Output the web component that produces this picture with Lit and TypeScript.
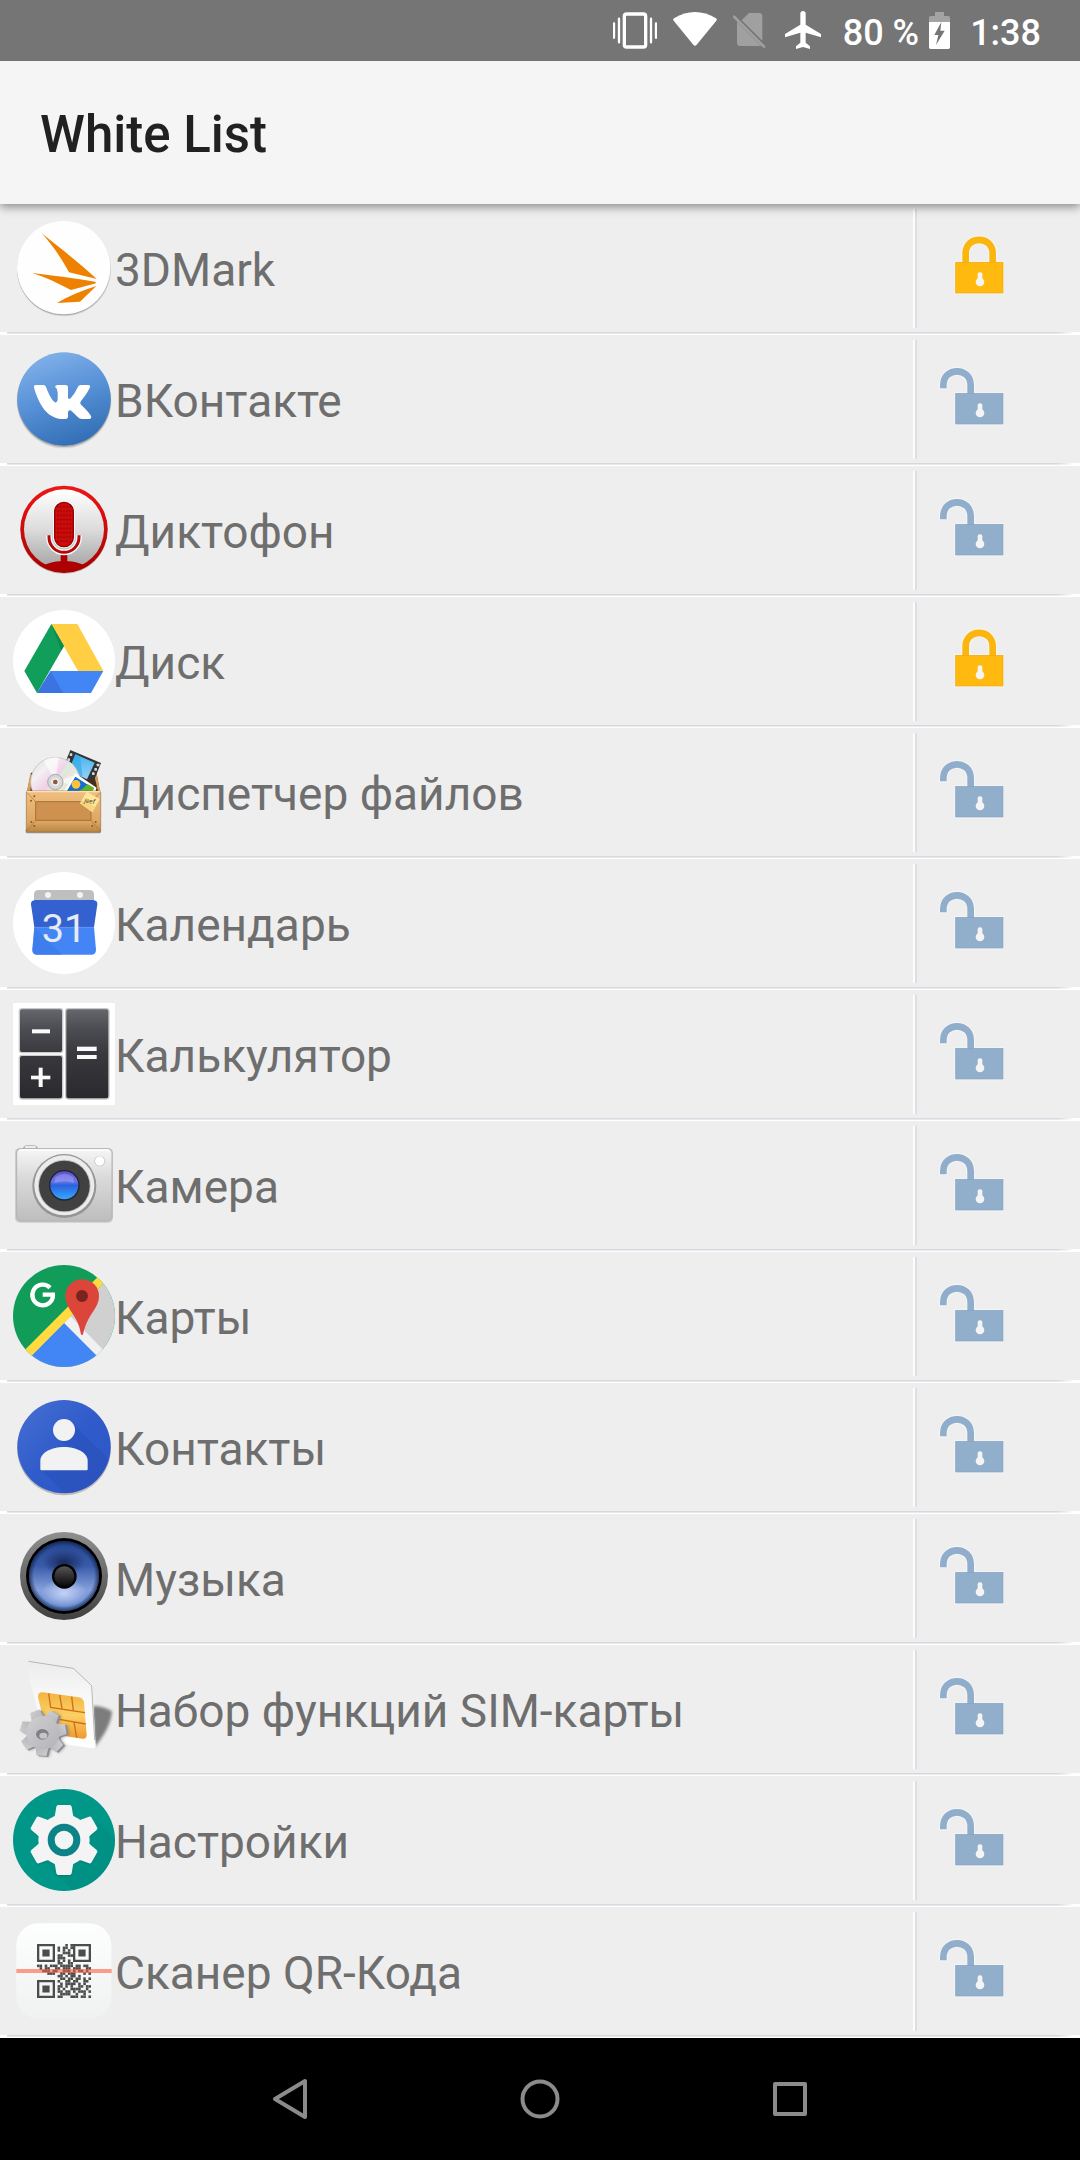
import { LitElement, html, css, svg } from "lit";
import { customElement, property, state } from "lit/decorators.js";

/* ---------- App icons: each one is drawn on a 306-unit square ---------- */

const mark3d = svg`
  <svg viewBox="39 531 306 306" aria-hidden="true">
    <circle cx="192" cy="688" r="141" fill="#000" opacity=".1"/>
    <circle cx="191" cy="686" r="140" fill="#000" opacity=".22"/>
    <circle cx="191" cy="683" r="140" fill="#fefefe"/>
    <g fill="#ee8200">
      <path d="M125 580C185 628 245 674 290 717L207 697C188 660 155 612 125 580z"/>
      <path d="M97 699C160 708 225 714 286 725L288 730L213 750C175 730 137 712 97 699z"/>
      <path d="M289 738L240 785L171 789C205 768 248 751 289 738z"/>
    </g>
  </svg>`;

const vk = svg`
  <svg viewBox="39 54 306 306" aria-hidden="true">
    <defs>
      <linearGradient id="vk-bg" x1=".25" y1="0" x2=".6" y2="1">
        <stop offset="0" stop-color="#82b2ea"/><stop offset=".5" stop-color="#5690d6"/><stop offset="1" stop-color="#326fb4"/>
      </linearGradient>
    </defs>
    <circle cx="192" cy="213" r="142" fill="#000" opacity=".1"/>
    <circle cx="192" cy="210" r="141" fill="#000" opacity=".2"/>
    <circle cx="192" cy="207" r="140" fill="url(#vk-bg)"/>
    <path fill="#fff" d="M107 165H130Q136 165 138 171C146 193 157 212 165 217Q173 219 173 205V187Q172 175 165 170Q167 165 173 165H197Q204 165 204 172V203Q206 210 213 203Q226 188 234 170Q236 165 242 165H265Q272 166 270 172Q262 190 243 213Q238 219 243 224Q265 244 273 258Q276 266 267 267H245Q239 267 234 262L217 245Q206 236 204 247V259Q204 267 196 267C140 270 116 220 102 173Q101 165 107 165z"/>
  </svg>`;

const micDots = [530, 543, 556, 569, 582, 595, 608, 621, 634].flatMap((y) =>
  [174, 183, 192, 201, 210].map((x) => svg`<circle cx=${x} cy=${y} r="2.4" fill="#8d0404"/>`)
);
const recorder = svg`
  <svg viewBox="39 447 306 306" aria-hidden="true">
    <defs>
      <linearGradient id="rec-bg" x1="0" y1="0" x2="0" y2="1">
        <stop offset="0" stop-color="#fff"/><stop offset=".5" stop-color="#dcdcdc"/><stop offset=".85" stop-color="#b3b3b3"/><stop offset="1" stop-color="#a5a5a5"/>
      </linearGradient>
      <linearGradient id="rec-red" x1="0" y1="0" x2="0" y2="1">
        <stop offset="0" stop-color="#ee1616"/><stop offset="1" stop-color="#a80000"/>
      </linearGradient>
      <clipPath id="rec-c"><circle cx="192" cy="598" r="125"/></clipPath>
    </defs>
    <circle cx="192" cy="601" r="131" fill="#000" opacity=".18"/>
    <circle cx="192" cy="598" r="131" fill="url(#rec-red)"/>
    <circle cx="192" cy="598" r="120" fill="url(#rec-bg)"/>
    <path clip-path="url(#rec-c)" d="M130 706Q165 692 182 694V664H202V694Q220 692 254 706L240 740H144z" fill="#ad0000"/>
    <path d="M147 616V622A45 45 0 0 0 237 622V616" fill="none" stroke="#fafafa" stroke-width="17"/>
    <path d="M147 616V622A45 45 0 0 0 237 622V616" fill="none" stroke="#b30909" stroke-width="9"/>
    <rect x="159" y="513" width="66" height="142" rx="33" fill="#f7f7f7"/>
    <rect x="164" y="517" width="56" height="133" rx="28" fill="#cc0b0b" stroke="#900" stroke-width="4"/>
    ${micDots}
  </svg>`;

const drive = svg`
  <svg viewBox="39 60 306 306" aria-hidden="true">
    <circle cx="192" cy="213" r="153" fill="#fff"/>
    <path d="M154 102H232L310 243H234z" fill="#ffce43"/>
    <path d="M152 243H310L273 309H111z" fill="#4285f4"/>
    <path d="M152 243L189 309H111z" fill="#3b74e0"/>
    <path d="M154 102L192 168L111 309L73 243z" fill="#119e5a"/>
    <path d="M154 102L192 168L184 182z" fill="#0b8248" opacity=".7"/>
  </svg>`;

const files = svg`
  <svg viewBox="39 453 306 306" aria-hidden="true">
    <defs>
      <linearGradient id="f-wood" x1="0" y1="0" x2="0" y2="1">
        <stop offset="0" stop-color="#f0bf80"/><stop offset=".75" stop-color="#dca663"/><stop offset="1" stop-color="#b98645"/>
      </linearGradient>
      <linearGradient id="f-disc" x1="0" y1="0" x2="1" y2="1">
        <stop offset="0" stop-color="#d8d8da"/><stop offset=".25" stop-color="#f3f1f3"/><stop offset=".45" stop-color="#f2cfe8"/><stop offset=".6" stop-color="#e8ecd9"/><stop offset="1" stop-color="#c8c9d0"/>
      </linearGradient>
      <linearGradient id="f-film" x1="0" y1="0" x2="0" y2="1">
        <stop offset="0" stop-color="#45b4f0"/><stop offset="1" stop-color="#98d0f8"/>
      </linearGradient>
    </defs>
    <rect x="77" y="716" width="226" height="14" rx="4" fill="#000" opacity=".35"/>
    <path d="M93 548L81 606H300L289 546z" fill="#4d2b14"/>
    <path d="M91 550L81 604H91L97 556zM289 550L301 604H294L284 562z" fill="#d69d5b"/>
    <path d="M211 480L303 519L280 576L187 540z" fill="#333436"/>
    <path d="M226 493L284 518L261 568L206 543z" fill="url(#f-film)"/>
    <path d="M226 493L240 499L248 560L206 543z" fill="#2aa7e6" opacity=".6"/>
    <g fill="#dadada">
      <rect x="209" y="490" width="8" height="8" rx="2"/><rect x="202" y="505" width="8" height="8" rx="2"/>
      <rect x="290" y="521" width="8" height="8" rx="2"/><rect x="283" y="534" width="8" height="8" rx="2"/><rect x="276" y="547" width="8" height="8" rx="2"/>
    </g>
    <circle cx="166" cy="576" r="74" fill="url(#f-disc)" stroke="#b9b9bd" stroke-width="2"/>
    <path d="M166 576L131 511A74 74 0 0 1 176 502zM166 576L236 551A74 74 0 0 1 240 585z" fill="#fff" opacity=".6"/>
    <path d="M166 576L205 513A74 74 0 0 1 222 528z" fill="#d6f0dc" opacity=".8"/>
    <circle cx="166" cy="576" r="23" fill="#d7d6d8" stroke="#aaa" stroke-width="3"/>
    <circle cx="166" cy="576" r="13" fill="#eceaea"/>
    <circle cx="166" cy="576" r="7" fill="#875a3d"/>
    <path d="M226 550L290 593L284 610H188z" fill="#fff"/>
    <path d="M226 560L279 594L272 606H199z" fill="#156fd0"/>
    <path d="M262 582L283 594L276 606H228Q246 602 262 582z" fill="#5db52a"/>
    <circle cx="228" cy="583" r="13" fill="#ffc23b"/>
    <rect x="79" y="603" width="223" height="123" rx="3" fill="url(#f-wood)" stroke="#9d7039" stroke-width="2"/>
    <path d="M80 605H301" stroke="#fbe0b5" stroke-width="4"/>
    <rect x="107" y="635" width="166" height="56" fill="#cf9150" stroke="#aa7034" stroke-width="3"/>
    <path d="M81 608L107 635M300 608L273 635M81 723L107 691M300 723L273 691" stroke="#a97439" stroke-width="2"/>
    <g fill="#8a5a2b"><circle cx="103" cy="619" r="3"/><circle cx="93" cy="632" r="3"/><circle cx="94" cy="696" r="3"/><circle cx="103" cy="708" r="3"/><circle cx="287" cy="696" r="3"/><circle cx="277" cy="708" r="3"/></g>
    <path d="M260 605L299 627L277 667L240 640z" fill="#ffe69a"/>
    <path d="M277 667L240 640L246 630L286 650z" fill="#f6d680"/>
    <text x="269" y="640" font-size="20" font-style="italic" text-anchor="middle" fill="#584a20" transform="rotate(8 269 635)">jeef</text>
  </svg>`;

const calendar = svg`
  <svg viewBox="39 66 306 306" aria-hidden="true">
    <circle cx="192" cy="219" r="153" fill="#fff"/>
    <path d="M102 160V134Q102 120 116 120H268Q282 120 282 134V160z" fill="#bfbfbf"/>
    <circle cx="144" cy="135" r="9" fill="#f2f2f2"/><circle cx="240" cy="135" r="9" fill="#f2f2f2"/>
    <path d="M103 232H282L288 299Q288 314 273 314H112Q97 314 97 299z" fill="#4385f5"/>
    <path d="M103 232L186 314H112Q97 314 97 299z" fill="#3a78e6" opacity=".6"/>
    <path d="M106 150H279Q293 151 292 163L282 232H103L93 163Q92 151 106 150z" fill="#3461d0"/>
    <path d="M103 232H282" stroke="#5f92f2" stroke-width="2"/>
    <text x="192" y="275" font-size="119" font-weight="400" text-anchor="middle" fill="#e6eaf2">31</text>
  </svg>`;

const calculator = svg`
  <svg viewBox="39 459 306 306" aria-hidden="true">
    <defs>
      <linearGradient id="c-all" gradientUnits="userSpaceOnUse" x1="0" y1="477" x2="0" y2="747">
        <stop offset="0" stop-color="#66676c"/><stop offset=".22" stop-color="#4c4d52"/><stop offset=".5" stop-color="#38383d"/><stop offset="1" stop-color="#29292e"/>
      </linearGradient>
    </defs>
    <rect x="39" y="459" width="306" height="306" fill="#fff"/>
    <g stroke="#c9c9cb" stroke-width="4" fill="url(#c-all)">
      <rect x="58" y="476" width="130" height="132" rx="8"/>
      <rect x="58" y="616" width="130" height="131" rx="8"/>
      <rect x="197" y="476" width="130" height="271" rx="8"/>
    </g>
    <g fill="#fafafa">
      <rect x="96" y="538" width="54" height="12"/>
      <rect x="93" y="677" width="58" height="11"/><rect x="116" y="653" width="12" height="58"/>
      <rect x="231" y="590" width="59" height="13"/><rect x="231" y="615" width="59" height="12"/>
    </g>
  </svg>`;

const camera = svg`
  <svg viewBox="39 42 306 306" aria-hidden="true">
    <defs>
      <linearGradient id="cam-b" x1="0" y1="0" x2="0" y2="1">
        <stop offset="0" stop-color="#f6f6f6"/><stop offset=".4" stop-color="#dadada"/><stop offset="1" stop-color="#bdbdbd"/>
      </linearGradient>
      <linearGradient id="cam-l" x1="0" y1="0" x2="0" y2="1">
        <stop offset="0" stop-color="#5a51d0"/><stop offset=".35" stop-color="#6a78ea"/><stop offset=".5" stop-color="#2c62dd"/><stop offset="1" stop-color="#36a8ff"/>
      </linearGradient>
    </defs>
    <rect x="45" y="84" width="294" height="224" rx="14" fill="#000" opacity=".14"/>
    <path d="M70 92V82Q72 76 82 76H100Q110 76 112 82V92z" fill="#a9a9a9"/>
    <rect x="74" y="78" width="34" height="6" rx="3" fill="#ececec"/>
    <rect x="50" y="86" width="286" height="217" rx="13" fill="url(#cam-b)" stroke="#b2b2b2" stroke-width="3"/>
    <path d="M60 90H326" stroke="#fff" stroke-width="5"/>
    <circle cx="193" cy="198" r="96" fill="#959595"/>
    <circle cx="193" cy="196" r="90" fill="#ececec"/>
    <circle cx="193" cy="198" r="79" fill="#bbb"/>
    <circle cx="193" cy="198" r="76" fill="#414141"/>
    <circle cx="193" cy="196" r="46" fill="#23232c"/>
    <circle cx="193" cy="196" r="42" fill="url(#cam-l)"/>
    <path d="M166 172Q193 150 220 172L222 190Q193 178 164 190z" fill="#b7b2f5" opacity=".4"/>
    <circle cx="299" cy="123" r="16" fill="#c2c2c2"/><circle cx="299" cy="123" r="14" fill="#fff"/>
  </svg>`;

const maps = svg`
  <svg viewBox="39 435 306 306" aria-hidden="true">
    <defs><clipPath id="map-c"><circle cx="192" cy="588" r="153"/></clipPath></defs>
    <g clip-path="url(#map-c)">
      <rect x="39" y="435" width="306" height="306" fill="#119d59"/>
      <path d="M360 440V745H95V705z" fill="#d0d0d0"/>
      <path d="M192 609L212 589L330 711L310 731z" fill="#f1f1f1"/>
      <path d="M192 609L324 741H60z" fill="#4286f5"/>
      <path d="M57 707L330 434V470L77 725z" fill="#ffdb3f"/>
    </g>
    <path d="M150 503A31 31 0 1 0 159 525M128 524H165" fill="none" stroke="#fff" stroke-width="13"/>
    <path d="M196 528A50 50 0 0 1 297 528C297 556 278 574 266 596C255 616 252 632 249 643Q246 648 243 643C240 628 238 615 227 596C214 573 196 554 196 528z" fill="#dc4539"/>
    <circle cx="246" cy="528" r="18" fill="#7b231e"/>
  </svg>`;

const contacts = svg`
  <svg viewBox="39 48 306 306" aria-hidden="true">
    <defs>
      <linearGradient id="con" x1="0" y1="0" x2="1" y2="1">
        <stop offset="0" stop-color="#4670d2"/><stop offset=".5" stop-color="#305bca"/><stop offset="1" stop-color="#2c56c5"/>
      </linearGradient>
      <clipPath id="con-c"><circle cx="192" cy="200" r="140"/></clipPath>
    </defs>
    <circle cx="192" cy="205" r="141" fill="#000" opacity=".22"/>
    <circle cx="192" cy="200" r="140" fill="url(#con)"/>
    <g clip-path="url(#con-c)" fill="#2849ab" opacity=".3">
      <path d="M215 127L340 252V350H205L124 270L263 268V240L169 173z"/>
    </g>
    <circle cx="192" cy="150" r="33" fill="#f2f2f2"/>
    <path d="M121 268V242C121 218 155 201 192 201S263 218 263 242V268Q263 271 260 271H124Q121 271 121 268z" fill="#f2f2f2"/>
  </svg>`;

const music = svg`
  <svg viewBox="39 441 306 306" aria-hidden="true">
    <defs>
      <linearGradient id="mu-r" x1="0" y1="0" x2="0" y2="1"><stop offset="0" stop-color="#8f8f8f"/><stop offset=".5" stop-color="#6a6a6a"/><stop offset="1" stop-color="#404040"/></linearGradient>
      <linearGradient id="mu-c" x1="0" y1="0" x2="0" y2="1"><stop offset="0" stop-color="#24448f"/><stop offset=".35" stop-color="#385aa8"/><stop offset=".7" stop-color="#85a0dc"/><stop offset="1" stop-color="#5a80c8"/></linearGradient>
      <radialGradient id="mu-g"><stop offset="0" stop-color="#c4d2f5"/><stop offset="1" stop-color="#c4d2f5" stop-opacity="0"/></radialGradient>
      <radialGradient id="mu-d"><stop offset=".1" stop-color="#1a2c60"/><stop offset="1" stop-color="#1a2c60" stop-opacity="0"/></radialGradient>
      <radialGradient id="mu-e"><stop offset=".86" stop-color="#101c44" stop-opacity="0"/><stop offset="1" stop-color="#101c44" stop-opacity=".7"/></radialGradient>
      <linearGradient id="mu-k" x1="0" y1="0" x2="0" y2="1"><stop offset="0" stop-color="#555"/><stop offset="1" stop-color="#080808"/></linearGradient>
    </defs>
    <circle cx="192" cy="588" r="132" fill="url(#mu-r)"/>
    <circle cx="192" cy="588" r="114" fill="#000"/>
    <circle cx="192" cy="588" r="105" fill="url(#mu-c)"/>
    <ellipse cx="192" cy="640" rx="70" ry="44" fill="url(#mu-g)"/>
    <ellipse cx="192" cy="548" rx="64" ry="38" fill="url(#mu-d)"/>
    <circle cx="192" cy="588" r="105" fill="url(#mu-e)"/>
    <circle cx="193" cy="589" r="37" fill="#030303"/>
    <circle cx="193" cy="589" r="30" fill="url(#mu-k)"/>
  </svg>`;

const simTeeth = [0, 51, 103, 154, 206, 257, 309].map(
  (a) => svg`<path d="M-20 -40L-15 -69H15L20 -40z" transform="rotate(${a + 30})"/>`
);
const sim = svg`
  <svg viewBox="39 54 306 306" aria-hidden="true">
    <defs>
      <linearGradient id="sim-b" x1="0" y1="0" x2="0" y2="1"><stop offset="0" stop-color="#ebeceb"/><stop offset=".4" stop-color="#f7f8f7"/><stop offset="1" stop-color="#fff"/></linearGradient>
      <linearGradient id="sim-y" x1="0" y1="0" x2="0" y2="1"><stop offset="0" stop-color="#f4b443"/><stop offset=".5" stop-color="#fbd064"/><stop offset="1" stop-color="#ee9a2f"/></linearGradient>
      <linearGradient id="sim-g" x1="0" y1="0" x2="1" y2="1"><stop offset="0" stop-color="#cfcfd2"/><stop offset="1" stop-color="#b4b4b8"/></linearGradient>
      <filter id="sim-s" x="-50%" y="-50%" width="200%" height="200%"><feGaussianBlur stdDeviation="5"/></filter>
    </defs>
    <path d="M278 198Q310 198 336 214Q334 260 284 322z" fill="#606060" opacity=".8" filter="url(#sim-s)"/>
    <path d="M86 62L220 83L277 136L287 318Q287 326 279 325L140 305Q108 200 79 74z" fill="url(#sim-b)"/>
    <path d="M86 64L220 85L275 137L284 300" fill="none" stroke="#b4b9b5" stroke-width="3"/>
    <path d="M114 172Q113 156 129 157L236 172Q250 174 252 188L260 284Q260 297 248 296L140 280z" fill="url(#sim-y)"/>
    <path d="M146 160L152 202L255 218M179 165L186 206M215 170L220 212M178 238L257 252M222 247L230 293M186 268L196 288" fill="none" stroke="#cf6f18" stroke-width="4"/>
    <g transform="translate(138 281)" fill="#55565a" opacity=".4" filter="url(#sim-s)">${simTeeth}<circle r="50"/></g>
    <g transform="translate(135 281)" fill="#8e8f92">${simTeeth}<circle r="50"/></g>
    <g transform="translate(129 278)" fill="url(#sim-g)">${simTeeth}<circle r="50"/></g>
    <ellipse cx="127" cy="283" rx="19" ry="16" fill="#808185"/>
    <ellipse cx="130" cy="287" rx="12" ry="9" fill="#c4c6c8"/>
  </svg>`;

const gearTeeth = [0, 60, 120, 180, 240, 300].map(
  (a) => svg`<path d="M150 545Q164 534 165 524L169 500Q170 495 175 495H209Q214 495 215 500L219 524Q220 534 234 545L192 600z" transform="rotate(${a} 192 600)"/>`
);
const settings = svg`
  <svg viewBox="39 447 306 306" aria-hidden="true">
    <defs><clipPath id="set-c"><circle cx="192" cy="600" r="153"/></clipPath></defs>
    <circle cx="192" cy="600" r="153" fill="#009688"/>
    <path clip-path="url(#set-c)" d="M292 543L380 631V780H250L120 660z" fill="#00857a" opacity=".3"/>
    <g fill="#00695f" opacity=".3" transform="translate(0 4)">${gearTeeth}</g>
    <g fill="#f4f4f4">${gearTeeth}<circle cx="192" cy="600" r="77"/></g>
    <circle cx="192" cy="600" r="49" fill="#0b8387"/>
    <circle cx="192" cy="600" r="28" fill="#f2f5f5"/>
  </svg>`;

const qrRows = [
  "#######....#.#.######",
  "#.....#.#.##.#.#....#",
  "#.###.#.#.#.#..#.##.#",
  "#.###.#...###..#.##.#",
  "#.###.#.##..##.#.##.#",
  "#.....#.###....#....#",
  "#######.#.#.#..######",
  "........##..##.......",
  "##.#.###.#####.##.##.",
  ".#.##..##.###.###..##",
  "..###.##..###.#.##.#.",
  "....###..##.###...#.#",
  "........##.#.##.#....",
  ".........##.##.##.#.#",
  "#######.#..##.##..##.",
  "#.....#..#.####.#.#..",
  "#.###.#.##.#.#..##.##",
  "#.###.#.#.#..####..#.",
  "#.###.#.##.##.#.###.#",
  "#.....#..####..#..#..",
  "#######.##...###.##.#",
];
/* The three corner finders are drawn whole, so their cells are skipped here. */
const qrCells = qrRows.flatMap((row, r) =>
  [...row].map((c, i) => {
    const finder = (r < 7 && (i < 7 || i > 13)) || (r > 13 && i < 7);
    return c === "#" && !finder
      ? svg`<rect x=${i * 10} y=${r * 10} width="10" height="10"/>`
      : "";
  })
);
const qrFinder = (x: number, y: number) => svg`
  <path transform="translate(${x} ${y})" fill-rule="evenodd" d="M0 0H70V70H0zM9 9V61H61V9zM21 21H49V49H21z"/>`;
const qr = svg`
  <svg viewBox="39 60 306 306" aria-hidden="true">
    <defs><linearGradient id="qr-b" x1="0" y1="0" x2="0" y2="1"><stop offset="0" stop-color="#fdfefe"/><stop offset="1" stop-color="#f0f2f1"/></linearGradient></defs>
    <path d="M192 70C300 70 334 90 334 213S300 356 192 356S49 336 49 213S84 70 192 70z" fill="url(#qr-b)"/>
    <rect x="49" y="70" width="285" height="286" rx="66" fill="url(#qr-b)"/>
    <svg x="111" y="132" width="162" height="162" viewBox="0 0 210 210" fill="#4b4d4c">
      ${qrCells}${qrFinder(0, 0)}${qrFinder(140, 0)}${qrFinder(0, 140)}
    </svg>
    <rect x="49" y="207" width="286" height="12" fill="#ff5838" opacity=".58"/>
  </svg>`;

/* ---------- Padlocks ---------- */

const keyhole = svg`<g fill="#f4f4f4"><rect x="293" y="217" width="14" height="30" rx="6"/><circle cx="300" cy="246" r="13"/></g>`;
const lockClosed = svg`
  <svg class="lock" viewBox="111 12 489 384" aria-hidden="true">
    <path d="M257 188V160C257 106 338 106 338 160V188" fill="none" stroke="#f7f5ef" stroke-width="27"/>
    <rect x="223" y="184" width="149" height="99" fill="#f7f5ef"/>
    <path d="M257 190V160C257 106 338 106 338 160V190" fill="none" stroke="#fbb50f" stroke-width="20"/>
    <rect x="227" y="187" width="142" height="92" fill="#ffb90f" stroke="#eda90f" stroke-width="2"/>
    ${keyhole}
  </svg>`;
const lockOpen = svg`
  <svg class="lock" viewBox="111 12 489 384" aria-hidden="true">
    <path d="M190 175V163C190 107 272 107 272 163V188" fill="none" stroke="#f4f5f7" stroke-width="26"/>
    <rect x="223" y="184" width="149" height="99" fill="#f4f5f7"/>
    <path d="M190 172V163C190 107 272 107 272 163V190" fill="none" stroke="#90adcb" stroke-width="20"/>
    <rect x="227" y="187" width="142" height="92" fill="#91aecb" stroke="#86a2c4" stroke-width="2"/>
    ${keyhole}
  </svg>`;

interface AppEntry {
  name: string;
  icon: unknown;
  locked: boolean;
}

const initialApps: AppEntry[] = [
  { name: "3DMark", icon: mark3d, locked: true },
  { name: "ВКонтакте", icon: vk, locked: false },
  { name: "Диктофон", icon: recorder, locked: false },
  { name: "Диск", icon: drive, locked: true },
  { name: "Диспетчер файлов", icon: files, locked: false },
  { name: "Календарь", icon: calendar, locked: false },
  { name: "Калькулятор", icon: calculator, locked: false },
  { name: "Камера", icon: camera, locked: false },
  { name: "Карты", icon: maps, locked: false },
  { name: "Контакты", icon: contacts, locked: false },
  { name: "Музыка", icon: music, locked: false },
  { name: "Набор функций SIM-карты", icon: sim, locked: false },
  { name: "Настройки", icon: settings, locked: false },
  { name: "Сканер QR-Кода", icon: qr, locked: false },
];

@customElement("status-bar")
export class StatusBar extends LitElement {
  static styles = css`
    :host {
      display: flex;
      justify-content: flex-end;
      align-items: center;
      height: 61px;
      padding-right: 39px;
      background: #757575;
      color: #fff;
      font: 500 36px/44px Roboto, sans-serif;
    }
    .icons {
      display: flex;
      gap: 16px;
      margin-right: 22px;
    }
    svg {
      display: block;
      height: 61px;
    }
    .wide { width: 44px; }
    .narrow { width: 36px; }
    .battery { width: 21px; margin: 0 20px 0 10px; }
    .text { padding-top: 4px; white-space: nowrap; }
  `;

  render() {
    return html`
      <div class="icons">
        <svg class="wide" viewBox="39 0 132 183" aria-hidden="true">
          <rect x="73" y="42" width="64" height="99" rx="7" fill="none" stroke="#fff" stroke-width="10"/>
          <path d="M42 70V113M57 56V127M153 56V127M168 70V113" stroke="#fff" stroke-width="7" stroke-linecap="round"/>
        </svg>
        <svg class="wide" viewBox="218 0 132 183" aria-hidden="true">
          <path d="M220 62Q217 58 221 55Q284 17 347 55Q351 58 348 62L289 134Q284 140 279 134z" fill="#fff"/>
        </svg>
        <svg class="narrow" viewBox="399 0 108 183" aria-hidden="true">
          <path d="M447 39H478Q487 39 487 48V122L425 61zM411 65L484 138H420Q411 138 411 129z" fill="#a0a0a0"/>
          <path d="M402 50L492 140" stroke="#a0a0a0" stroke-width="8" stroke-linecap="round"/>
        </svg>
        <svg class="narrow" viewBox="555 0 108 183" aria-hidden="true">
          <path d="M601 41Q601 33 609 33Q617 33 617 41V74L663 102V112L617 98V128L630 139V147L609 141L588 147V139L601 128V98L555 112V102L601 74z" fill="#fff"/>
        </svg>
      </div>
      <span class="text">80 %</span>
      <svg class="battery" viewBox="987 0 63 183" aria-hidden="true">
        <path d="M1005 36H1032V48H1045Q1050 48 1050 53V66H987V53Q987 48 992 48H1005z" fill="#a3a3a3"/>
        <path fill-rule="evenodd" d="M987 66H1050V142Q1050 147 1045 147H992Q987 147 987 142zM1024 66L1003 105H1015L1008 135L1034 92H1021z" fill="#fff"/>
      </svg>
      <span class="text">1:38</span>
    `;
  }
}

@customElement("app-row")
export class AppRow extends LitElement {
  @property({ attribute: false }) entry!: AppEntry;

  static styles = css`
    :host {
      display: block;
      background: #fff;
      font: 400 46px/56px Roboto, sans-serif;
    }
    .body {
      display: flex;
      align-items: center;
      height: 128px;
      padding-left: 13px;
      background: #eee;
    }
    .icon {
      flex: none;
      width: 102px;
      height: 102px;
    }
    .icon svg {
      display: block;
    }
    .name {
      flex: 1;
      min-width: 0;
      padding-top: 4px;
      color: #6e6e6e;
      white-space: nowrap;
      overflow: hidden;
      text-overflow: ellipsis;
    }
    .rule {
      flex: none;
      width: 4px;
      height: 119px;
      background: linear-gradient(to right, #fcfcfc 0 2px, #dcdfe2 2px 4px);
    }
    .toggle {
      flex: none;
      width: 163px;
      height: 128px;
      margin: 0;
      padding: 0;
      border: 0;
      background: none;
    }
    .lock {
      display: block;
      width: 163px;
      height: 128px;
    }
    .divider {
      height: 3px;
      margin-left: 7px;
      background:
        linear-gradient(to right, transparent calc(100% - 22px), #fff calc(100% - 6px)),
        linear-gradient(#d6d9df 0 1px, #e7e9ec 1px 2px, #fff 2px 3px);
    }
  `;

  private toggle() {
    this.dispatchEvent(new CustomEvent("toggle-lock", { bubbles: true, composed: true }));
  }

  render() {
    const { name, icon, locked } = this.entry;
    return html`
      <div class="body">
        <div class="icon">${icon}</div>
        <div class="name">${name}</div>
        <div class="rule"></div>
        <button class="toggle" aria-label=${name} aria-pressed=${locked ? "true" : "false"} @click=${this.toggle}>
          ${locked ? lockClosed : lockOpen}
        </button>
      </div>
      <div class="divider"></div>
    `;
  }
}

@customElement("nav-bar")
export class NavBar extends LitElement {
  static styles = css`
    :host {
      display: flex;
      justify-content: center;
      height: 122px;
      background: #000;
    }
    button {
      display: flex;
      justify-content: center;
      align-items: center;
      width: 250px;
      margin: 0;
      padding: 0;
      border: 0;
      background: none;
    }
    svg {
      width: 44px;
      height: 44px;
      fill: none;
      stroke: #8b8b8b;
      stroke-width: 4;
      stroke-linejoin: round;
    }
  `;

  render() {
    return html`
      <button aria-label="Назад"><svg viewBox="0 0 44 44"><path d="M37 4V40L7 22z"/></svg></button>
      <button aria-label="Домой"><svg viewBox="0 0 44 44"><circle cx="22" cy="22" r="17.5"/></svg></button>
      <button aria-label="Недавние"><svg viewBox="0 0 44 44"><rect x="7" y="7" width="30" height="30"/></svg></button>
    `;
  }
}

@customElement("app-root")
export class AppRoot extends LitElement {
  @state() private apps = initialApps;

  static styles = css`
    :host {
      display: flex;
      flex-direction: column;
      min-height: 100vh;
      background: #eee;
      font-family: Roboto, sans-serif;
    }
    .title-bar {
      position: relative;
      z-index: 1;
      display: flex;
      align-items: center;
      height: 143px;
      padding: 0 40px;
      background: #f5f5f5;
      box-shadow: 0 3px 9px rgba(0, 0, 0, 0.42);
    }
    .title {
      margin: 0;
      padding-top: 4px;
      color: #212121;
      font: 500 51px/64px Roboto, sans-serif;
    }
    .list {
      flex: 1;
      margin: 0;
      padding: 0;
      list-style: none;
    }
    .status {
      position: relative;
      z-index: 2;
    }
  `;

  private toggle(index: number) {
    this.apps = this.apps.map((a, i) => (i === index ? { ...a, locked: !a.locked } : a));
  }

  render() {
    return html`
      <status-bar class="status"></status-bar>
      <header class="title-bar"><h1 class="title">White List</h1></header>
      <ul class="list">
        ${this.apps.map(
          (entry, i) => html`<li><app-row .entry=${entry} @toggle-lock=${() => this.toggle(i)}></app-row></li>`
        )}
      </ul>
      <nav-bar></nav-bar>
    `;
  }
}
